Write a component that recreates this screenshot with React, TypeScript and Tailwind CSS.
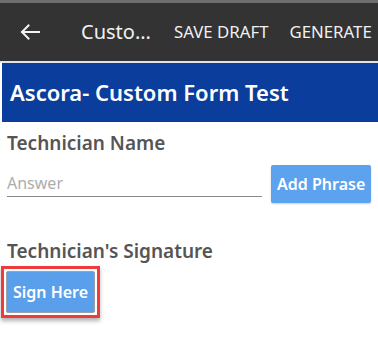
import React from 'react';

function BackArrow() {
  return (
    <svg width="20" height="16" viewBox="0 0 20 16" fill="none">
      <path d="M19 8H2M8.5 1.5L2 8l6.5 6.5" stroke="#f2f2f2" strokeWidth="2" strokeLinecap="square" />
    </svg>
  );
}

export default function App() {
  return (
    <div className="w-[378px] h-[341px] bg-white overflow-hidden font-['Noto_Sans',sans-serif]">
      {/* app bar */}
      <div className="h-[3px] bg-[#6e6e6e]" />
      <div className="h-[58px] bg-[#333333] flex items-center text-[#f0f0f0]">
        <div className="w-[81px] pl-[20px] flex items-center">
          <BackArrow />
        </div>
        <span className="text-[20px] leading-none">Custo...</span>
        <span className="ml-[23px] text-[16.8px] leading-none">SAVE DRAFT</span>
        <span className="ml-[21px] text-[16.8px] leading-none">GENERATE</span>
      </div>
      <div className="h-[2px] bg-[#dfe3ea]" />

      {/* form title */}
      <div className="pl-[2px]">
        <div className="h-[59px] bg-[#0b3d9c] flex items-center pl-[8px] pb-[2px]">
          <h1 className="text-white text-[22px] font-semibold leading-none">Ascora- Custom Form Test</h1>
        </div>
      </div>

      <div className="px-[7px]">
        {/* text field */}
        <h2 className="mt-[8px] text-[19px] font-semibold text-[#555555] leading-[26px]">Technician Name</h2>
        <div className="mt-[9px] flex items-start">
          <div className="w-[256px] border-b border-[#8a8a8a] h-[32px] flex items-end pb-[5px]">
            <span className="text-[16px] text-[#adadad] leading-none">Answer</span>
          </div>
          <button className="ml-[9px] w-[100px] h-[38px] rounded-[2px] bg-[#5da2ee] text-white text-[16px] font-semibold shadow-[0_1px_2px_rgba(0,0,0,0.2)]">
            Add Phrase
          </button>
        </div>

        {/* signature */}
        <h2 className="mt-[35px] text-[19px] font-semibold text-[#555555] leading-[26px]">Technician's Signature</h2>
      </div>
      <div className="mt-[2px] ml-[1px] w-[99px] h-[52px] border-[3px] border-[#ee3b3b] p-[2px] shadow-[0_3px_4px_rgba(0,0,0,0.3)]">
        <button className="w-full h-full rounded-[2px] bg-[#5a9fec] border border-[#9aa3ad] text-white text-[16px] font-semibold">
          Sign Here
        </button>
      </div>
    </div>
  );
}
